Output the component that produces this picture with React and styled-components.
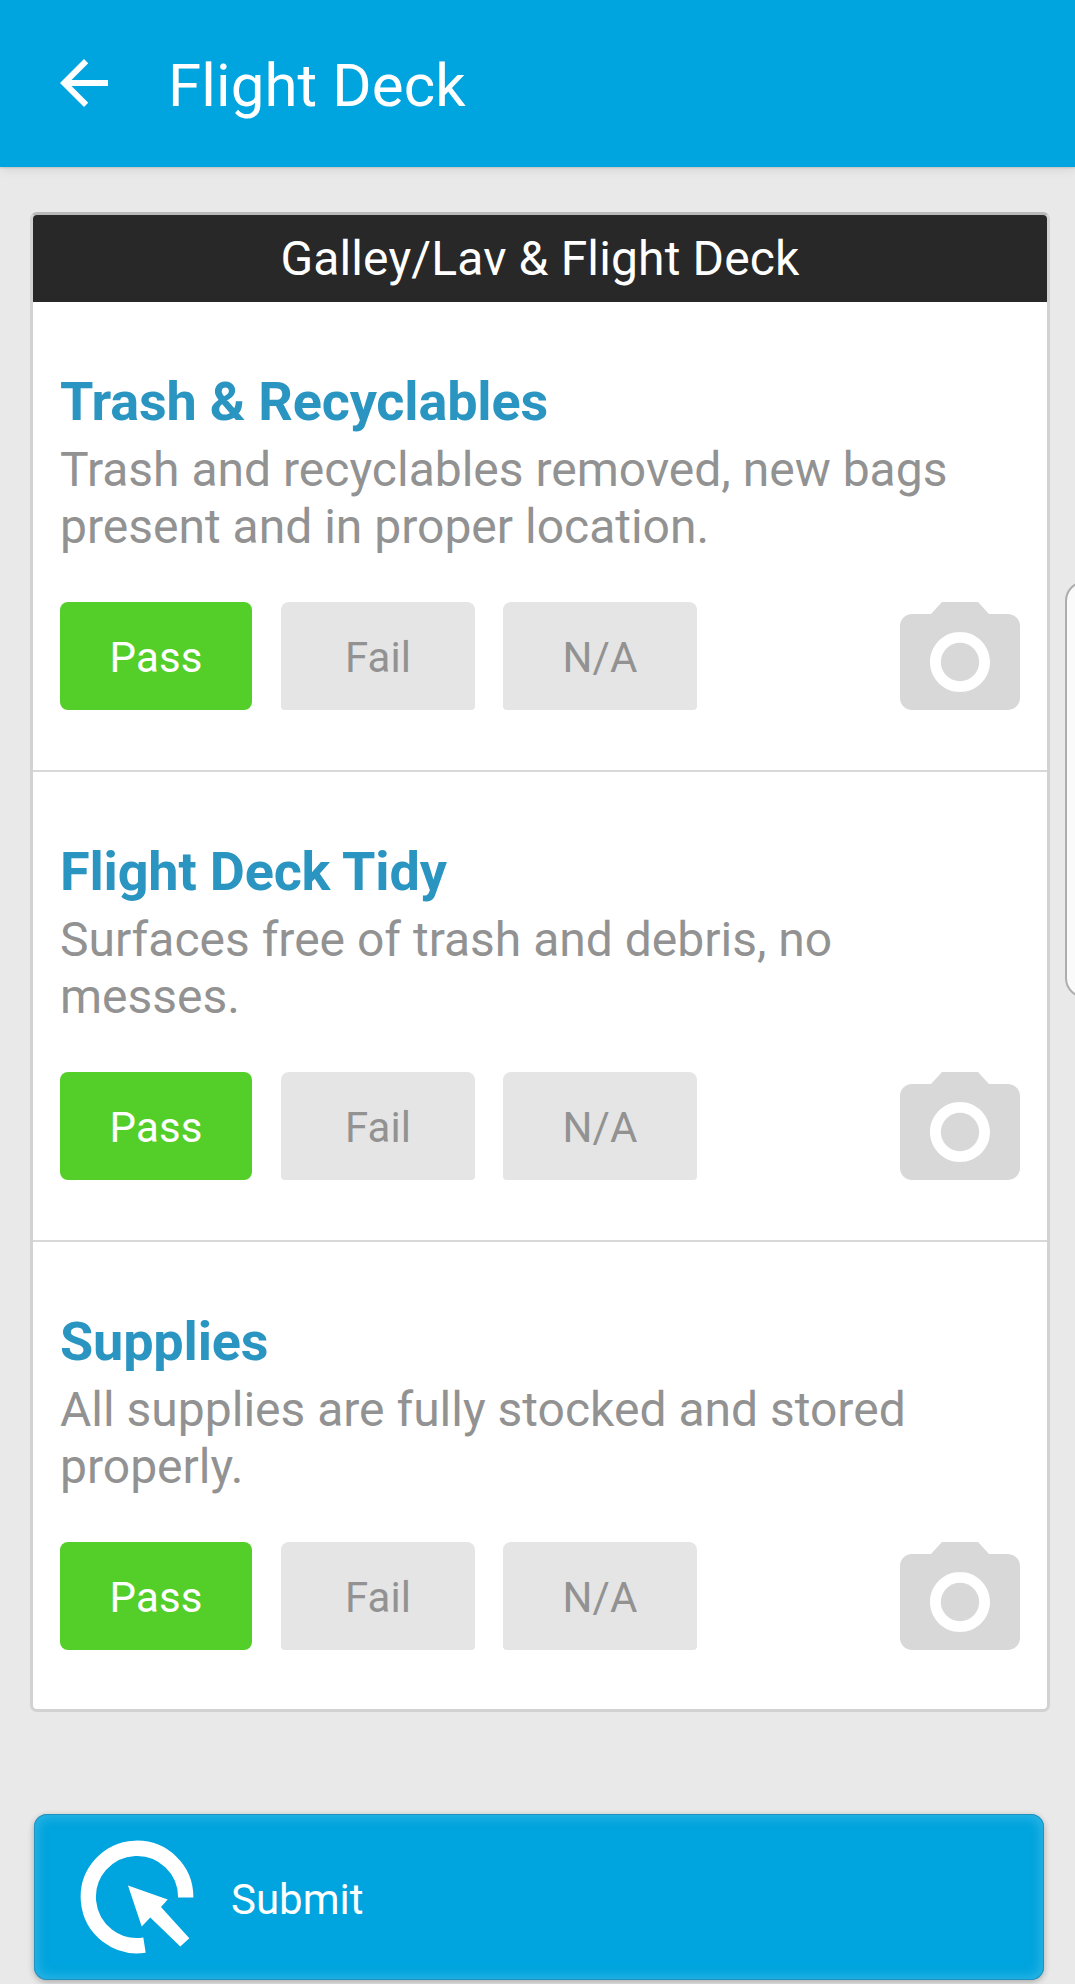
import React from "react";
import styled, { createGlobalStyle } from "styled-components";

const GlobalStyle = createGlobalStyle`
  * { box-sizing: border-box; }
  html, body { margin: 0; padding: 0; background: #e9e9e9; }
  body { font-family: Roboto, "Liberation Sans", sans-serif; overflow: hidden; }
  h1, h2, h3, p { margin: 0; font-weight: 400; }
  button { font-family: inherit; border: 0; margin: 0; padding: 0; }
`;

const Screen = styled.div`
  position: relative;
  width: 1075px;
  height: 1984px;
  overflow: hidden;
  display: flex;
  flex-direction: column;
  background: #e9e9e9;
`;

const AppBar = styled.header`
  flex: none;
  height: 167px;
  display: flex;
  align-items: center;
  gap: 48px;
  padding-left: 48px;
  background: #00a4de;
  box-shadow: 0 1px 2px rgba(0, 0, 0, 0.14), 0 3px 10px rgba(0, 0, 0, 0.08);
`;

const BackIcon = styled.svg`
  width: 72px;
  height: 72px;
  margin-bottom: 1px;
  fill: #fff;
`;

const ScreenTitle = styled.h1`
  padding-top: 4px;
  font-size: 60px;
  line-height: 72px;
  color: #fff;
  white-space: nowrap;
  letter-spacing: 0.1px;
`;

const Card = styled.section`
  flex: none;
  width: 1020px;
  margin: 45px 0 0 30px;
  border: 3px solid #d2d2d2;
  border-top-color: #b9b9b9;
  border-radius: 7px;
  background: #fff;
  overflow: hidden;
`;

const CardHeader = styled.h2`
  height: 87px;
  background: #282828;
  color: #fff;
  font-size: 48px;
  line-height: 87px;
  text-align: center;
  letter-spacing: 0.15px;
`;

const Item = styled.article`
  height: 470px;
  padding: 68px 27px 0;
  border-bottom: 2px solid #d8d8d8;

  &:last-child {
    height: 467px;
    border-bottom: 0;
  }
`;

const ItemTitle = styled.h3`
  font-size: 54px;
  font-weight: 700;
  line-height: 64px;
  letter-spacing: -0.18px;
  color: #2b95c2;
`;

const ItemText = styled.p`
  margin-top: 8px;
  height: 113px;
  font-size: 48px;
  line-height: 56.5px;
  color: #929292;
  white-space: pre-line;
`;

const Actions = styled.div`
  display: flex;
  align-items: center;
  margin-top: 46px;
  height: 109px;
`;

const Choice = styled.button`
  width: ${(p) => (p.$selected ? 192 : 194)}px;
  height: 108px;
  margin-right: ${(p) => (p.$selected ? 29 : 28)}px;
  padding-top: 5px;
  border-radius: ${(p) => (p.$selected ? "8px" : "8px 8px 4px 4px")};
  background: ${(p) => (p.$selected ? "#54cf29" : "#e5e5e5")};
  color: ${(p) => (p.$selected ? "#fff" : "#929292")};
  font-size: 42px;
  line-height: 50px;
  letter-spacing: 0.1px;
`;

const CameraIcon = styled.svg`
  width: 120px;
  height: 108px;
  margin-left: auto;
  fill: #d8d8d8;
`;

const SubmitButton = styled.button`
  flex: none;
  display: flex;
  align-items: center;
  gap: 37px;
  width: 1010px;
  height: 166px;
  margin: 102px 0 0 34px;
  padding-left: 46px;
  border-radius: 13px;
  background: #00a4de;
  color: #fff;
  box-shadow: inset 0 0 0 1px rgba(30, 135, 175, 0.7),
    inset 0 0 12px 3px rgba(75, 190, 232, 0.65),
    0 2px 6px rgba(0, 0, 0, 0.28);
`;

const SubmitIcon = styled.svg`
  width: 114px;
  height: 114px;
`;

const SubmitLabel = styled.span`
  padding-top: 5px;
  font-size: 42px;
  line-height: 50px;
`;

const EdgeHandle = styled.div`
  position: absolute;
  top: 581px;
  right: -20px;
  width: 30px;
  height: 417px;
  border: 2px solid #adadad;
  border-radius: 20px 0 0 20px;
  background: #fafafa;
`;

const ITEMS = [
  {
    title: "Trash & Recyclables",
    text: "Trash and recyclables removed, new bags\npresent and in proper location.",
  },
  {
    title: "Flight Deck Tidy",
    text: "Surfaces free of trash and debris, no\nmesses.",
  },
  {
    title: "Supplies",
    text: "All supplies are fully stocked and stored\nproperly.",
  },
];

const CHOICES = ["Pass", "Fail", "N/A"];

function Camera() {
  return (
    <CameraIcon viewBox="2 2 20 18">
      <path
        fillRule="evenodd"
        d="M9 2 7.17 4H4c-1.1 0-2 .9-2 2v12c0 1.1.9 2 2 2h16c1.1 0 2-.9 2-2V6c0-1.1-.9-2-2-2h-3.17L15 2H9zm3 15c-2.76 0-5-2.24-5-5s2.24-5 5-5 5 2.24 5 5-2.24 5-5 5z"
      />
      <circle cx="12" cy="12" r="3.2" />
    </CameraIcon>
  );
}

function ChecklistItem({ title, text, selected }) {
  return (
    <Item>
      <ItemTitle>{title}</ItemTitle>
      <ItemText>{text}</ItemText>
      <Actions>
        {CHOICES.map((choice) => (
          <Choice key={choice} $selected={choice === selected}>
            {choice}
          </Choice>
        ))}
        <Camera />
      </Actions>
    </Item>
  );
}

export default function App() {
  return (
    <Screen>
      <GlobalStyle />
      <AppBar>
        <BackIcon viewBox="0 0 24 24">
          <path d="M20 11H7.83l5.59-5.59L12 4l-8 8 8 8 1.41-1.41L7.83 13H20v-2z" />
        </BackIcon>
        <ScreenTitle>Flight Deck</ScreenTitle>
      </AppBar>
      <Card>
        <CardHeader>Galley/Lav &amp; Flight Deck</CardHeader>
        {ITEMS.map((item) => (
          <ChecklistItem key={item.title} {...item} selected="Pass" />
        ))}
      </Card>
      <SubmitButton>
        <SubmitIcon viewBox="0 0 114 114">
          <path
            d="M105.7 57.5A48.7 48.7 0 1 0 64.5 105.1"
            fill="none"
            stroke="#fff"
            strokeWidth="15.3"
          />
          <path
            d="M48 45.5 87.7 59.5 81 67 109.3 98.2 100.3 106.5 70.3 77.5 61.7 86.5Z"
            fill="#fff"
          />
        </SubmitIcon>
        <SubmitLabel>Submit</SubmitLabel>
      </SubmitButton>
      <EdgeHandle />
    </Screen>
  );
}
